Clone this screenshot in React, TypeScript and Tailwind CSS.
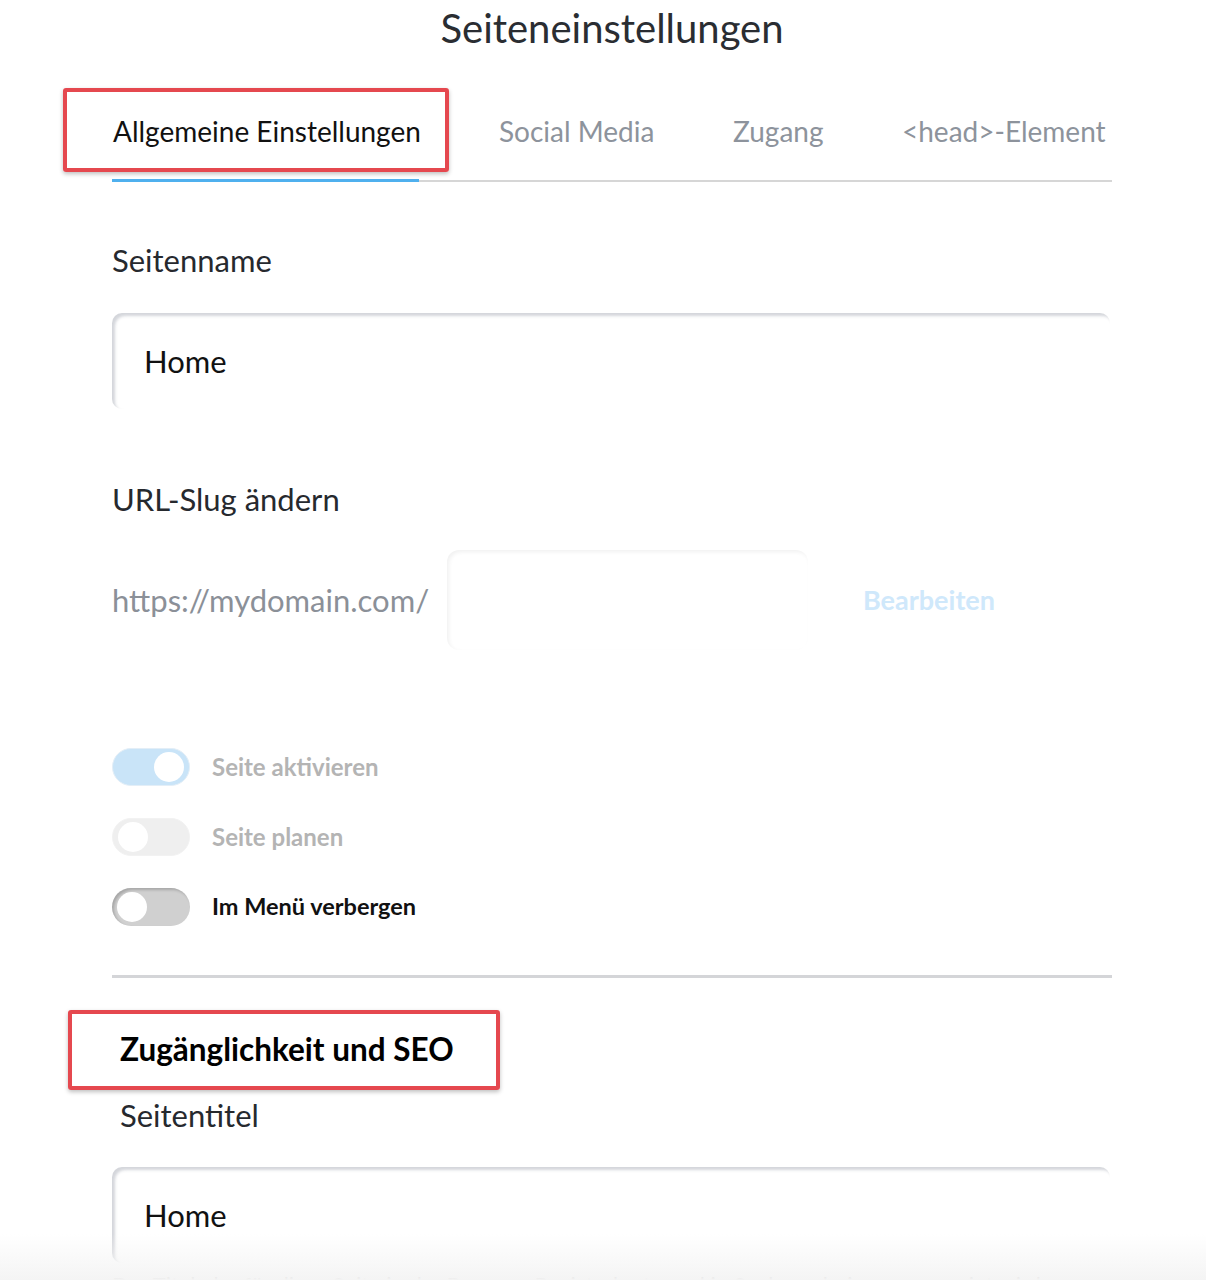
import React from "react";

const font = { fontFamily: "Lato, 'Noto Sans', sans-serif" };

function Toggle({ kind }: { kind: "on" | "off-light" | "off" }) {
  if (kind === "on") {
    return (
      <div className="w-[78px] h-[38px] rounded-full bg-[#c9e4f8] border border-[#e3eef7] flex items-center justify-end pr-[5px]">
        <div className="w-[30px] h-[30px] rounded-full bg-white" />
      </div>
    );
  }
  if (kind === "off-light") {
    return (
      <div className="w-[78px] h-[38px] rounded-full bg-[#efefef] border border-[#f2f2f2] flex items-center pl-[5px]">
        <div className="w-[30px] h-[30px] rounded-full bg-white" />
      </div>
    );
  }
  return (
    <div className="w-[78px] h-[38px] rounded-full bg-[#d0d0d0] shadow-[inset_2px_2px_3px_rgba(0,0,0,0.2)] flex items-center pl-[5px]">
      <div className="w-[30px] h-[30px] rounded-full bg-white" />
    </div>
  );
}

export default function App() {
  return (
    <div className="relative w-[1206px] h-[1280px] overflow-hidden bg-white" style={font}>
      <h1 className="pt-[3px] pl-[18px] h-[53px] leading-[50px] text-center text-[40px] text-[#2a2d32] whitespace-nowrap">Seiteneinstellungen</h1>

      <div className="ml-[112px] w-[1000px]">
        {/* Tabs */}
        <div className="mt-[58px] flex border-b-2 border-[#d6d6d6] text-[28px] leading-[40px] whitespace-nowrap">
          <div className="relative w-[307px] shrink-0 pb-[28px] -mb-[2px] border-b-[3px] border-[#4fb0ee] text-[#111]">
            <span className="pl-[1px]">Allgemeine Einstellungen</span>
            <div className="absolute left-[-49px] w-[386px] top-[-23px] h-[84px] border-[4px] border-[#e5484f] rounded-[3px] shadow-[0_2px_4px_rgba(0,0,0,0.25)]" />
          </div>
          <div className="ml-[80px] w-[234px] shrink-0 text-[#8d939c]">Social Media</div>
          <div className="w-[169px] shrink-0 text-[#8d939c]">Zugang</div>
          <div className="shrink-0 text-[#8d939c]">&lt;head&gt;-Element</div>
        </div>

        {/* Seitenname */}
        <div className="mt-[61px] h-[34px] leading-[34px] text-[31px] text-[#26292e]">Seitenname</div>
        <div className="mt-[36px] w-[998px] h-[96px] rounded-[10px] shadow-[inset_3px_3px_3px_rgba(60,70,90,0.22)] flex items-center pl-[32px] text-[31px] text-[#111]">
          Home
        </div>

        {/* URL slug */}
        <div className="mt-[73px] h-[34px] leading-[34px] text-[31px] text-[#26292e]">URL-Slug ändern</div>
        <div className="mt-[34px] h-[100px] flex items-center">
          <div className="w-[335px] shrink-0 text-[31px] text-[#8b9098] whitespace-nowrap">https://mydomain.com/</div>
          <div className="w-[361px] h-[100px] shrink-0 rounded-[12px] shadow-[inset_2px_2px_4px_rgba(0,0,0,0.06)]" />
          <div className="ml-[55px] text-[27px] font-bold text-[#cfe8fb]">Bearbeiten</div>
        </div>

        {/* Toggles */}
        <div className="mt-[98px] flex flex-col gap-[32px]">
          <div className="flex items-center gap-[22px]">
            <Toggle kind="on" />
            <span className="text-[24px] font-bold text-[#b4b4b4]">Seite aktivieren</span>
          </div>
          <div className="flex items-center gap-[22px]">
            <Toggle kind="off-light" />
            <span className="text-[24px] font-bold text-[#b4b4b4]">Seite planen</span>
          </div>
          <div className="flex items-center gap-[22px]">
            <Toggle kind="off" />
            <span className="text-[23.5px] font-bold text-[#111]">Im Menü verbergen</span>
          </div>
        </div>

        <div className="mt-[49px] h-[3px] bg-[#d4d5d8]" />

        {/* SEO */}
        <div className="relative mt-[53px] ml-[8px] h-[36px] leading-[36px] text-[31.5px] font-bold text-black w-fit whitespace-nowrap">
          Zugänglichkeit und SEO
          <div className="absolute left-[-52px] w-[432px] top-[-21px] h-[80px] border-[4px] border-[#e5484f] rounded-[3px] shadow-[0_2px_4px_rgba(0,0,0,0.25)]" />
        </div>
        <div className="mt-[31px] ml-[8px] h-[34px] leading-[34px] text-[31px] text-[#26292e]">Seitentitel</div>
        <div className="mt-[35px] w-[998px] h-[96px] rounded-[10px] shadow-[inset_3px_3px_3px_rgba(60,70,90,0.22)] flex items-center pl-[32px] text-[31px] text-[#111]">
          Home
        </div>
        <div className="mt-[7px] text-[22px] leading-[30px] text-[#555] whitespace-nowrap">
          Der Titel, der für diese Seite in der Browser-Registerkarte und in Suchergebnissen angezeigt wird.
        </div>
      </div>

      <div className="absolute left-0 right-0 bottom-0 h-[46px] bg-gradient-to-b from-white/0 to-[#f4f4f4] pointer-events-none" />
    </div>
  );
}
